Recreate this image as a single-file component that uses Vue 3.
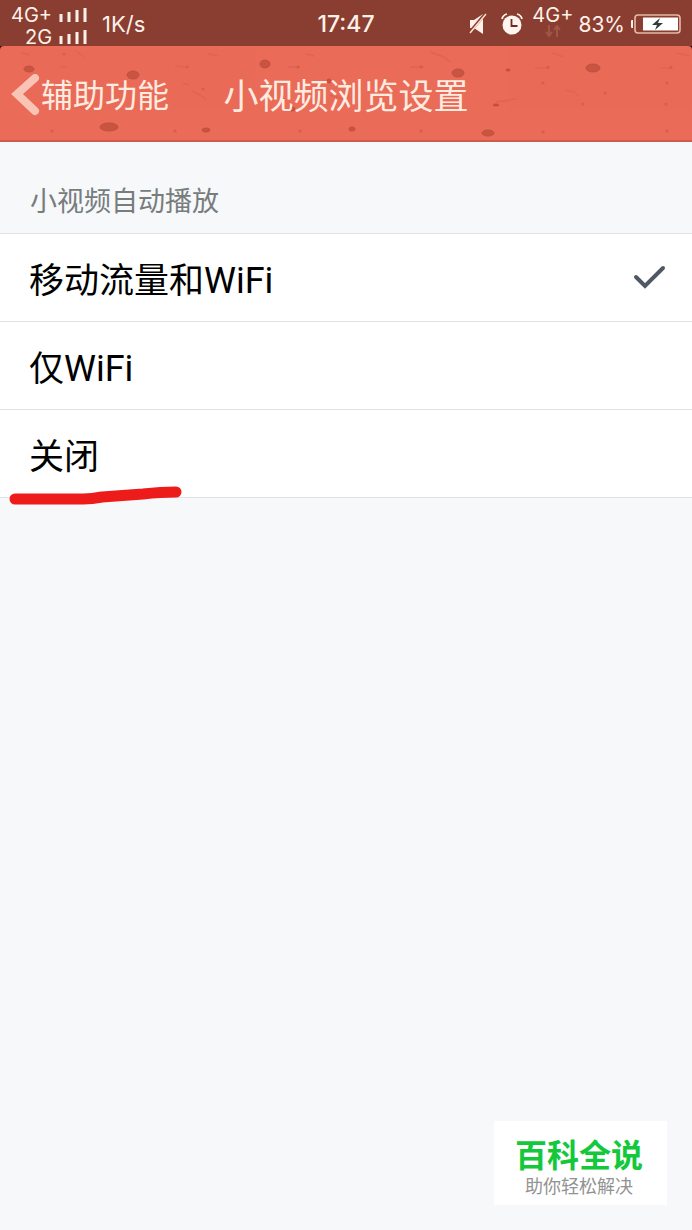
<script setup>
import { ref } from 'vue'

const selected = ref('all')
const options = [
  { value: 'all', han: '移动流量和', latin: 'WiFi' },
  { value: 'wifi', han: '仅', latin: 'WiFi' },
  { value: 'off', han: '关闭', latin: '', marked: true }
]

const pits = [
  [29, 24, 5, 3], [133, 30, 6, 4], [109, 82, 9, 4], [206, 85, 4, 2],
  [265, 19, 5, 4], [329, 36, 2, 2], [292, 64, 3, 2], [352, 84, 3, 2],
  [458, 28, 6, 4], [508, 25, 2, 1], [593, 23, 7, 4], [496, 60, 3, 1],
  [488, 88, 6, 3]
]
const specks = [
  [64, 9], [52, 51], [52, 86], [187, 22], [175, 86], [203, 44], [298, 22],
  [300, 86], [421, 22], [421, 86], [548, 22], [543, 38], [543, 87], [583, 59],
  [671, 22], [667, 38], [666, 59], [667, 86], [605, 48]
]
const scratches = [
  'M22 8l8 2', 'M60 22l7 0', 'M76 6l8 6', 'M175 21l10 1', 'M183 38l6 2',
  'M192 46l10 5 4 4', 'M208 9l10 2', 'M306 9l8 2', 'M288 22l12 0',
  'M410 22l14 0', 'M430 7l14 5 6 5', 'M552 8l12 4', 'M535 23l14 0',
  'M566 45l8 2 5 4', 'M676 8l14 3', 'M660 23l12 0', 'M496 57l20 -3',
  'M76 60l10 4', 'M330 50l14 4'
]
</script>

<template>
  <main class="screen">
    <div class="top">
      <div class="status">
        <div class="side">
          <div class="sims">
            <div class="sim">
              <span>4G+</span>
              <svg width="28" height="14" viewBox="0 0 28 14" aria-hidden="true"><path d="M2 6v8M10 4v10M18 2v12M26 0v14" /></svg>
            </div>
            <div class="sim">
              <span>2G</span>
              <svg width="28" height="14" viewBox="0 0 28 14" aria-hidden="true"><path d="M2 6v8M10 4v10M18 2v12M26 0v14" /></svg>
            </div>
          </div>
          <span class="speed">1K/s</span>
        </div>
        <time class="clock">17:47</time>
        <div class="side right">
          <svg class="mute" width="18" height="22" viewBox="0 0 18 22" aria-hidden="true">
            <path d="M1 7h4l9-6v20l-9-6H1z" fill="#fff1e9" />
            <path d="M0 20L16 1" stroke="#893e31" stroke-width="3" />
            <path d="M1 20L17 1" stroke="#ffe0d0" stroke-width="1.5" />
          </svg>
          <svg class="alarm" width="22" height="22" viewBox="0 0 22 22" aria-hidden="true">
            <circle cx="11" cy="12" r="9.500" fill="#fff4ee" />
            <path d="M1 6q1-4 5-5M21 6q-1-4-5-5" fill="none" stroke="#fff4ee" stroke-width="1.8" />
            <path d="M10.500 6v7h6" fill="none" stroke="#6b2c22" stroke-width="1.8" />
          </svg>
          <div class="data">
            <span>4G+</span>
            <svg width="16" height="12" viewBox="0 0 16 12" aria-hidden="true"><path d="M4 0v10M1 7l3 4 3-4M12 12V2M9 5l3-4 3 4" /></svg>
          </div>
          <span class="percent">83%</span>
          <svg class="battery" width="51" height="20" viewBox="0 0 51 20" aria-hidden="true">
            <path d="M3 6H2q-1 0-1 1v6q0 1 1 1h1z" fill="#fff1e9" />
            <rect x="5" y="1" width="45" height="18" rx="3" fill="none" stroke="#e8b9a9" stroke-width="1.6" />
            <rect x="13" y="3.500" width="35" height="13" fill="#fff" />
            <path d="M30 4l-8 7h5l-2 5 8-7h-5z" fill="#333b3b" />
          </svg>
        </div>
      </div>

      <header class="bar">
        <svg class="texture" viewBox="0 0 692 96" preserveAspectRatio="xMidYMid slice" aria-hidden="true">
          <g fill="none" stroke="#d45a48" stroke-width="1.5" opacity="0.4">
            <path v-for="d in scratches" :key="d" :d="d" />
          </g>
          <g fill="#cb5341" opacity="0.5">
            <circle v-for="(s, i) in specks" :key="i" :cx="s[0]" :cy="s[1]" r="1.600" />
          </g>
          <g fill="#c95441" stroke="#b94d3a" stroke-width="0.8">
            <ellipse v-for="(p, i) in pits" :key="i" :cx="p[0]" :cy="p[1]" :rx="p[2]" :ry="p[3]" />
          </g>
        </svg>
        <button class="back" type="button">
          <svg width="30" height="44" viewBox="0 0 30 44" aria-hidden="true">
            <path d="M24 4L6 20l18 17" fill="none" stroke="#f9c3b5" stroke-width="8" stroke-linecap="round" stroke-linejoin="miter" />
          </svg>
          <span>辅助功能</span>
        </button>
        <h1>小视频浏览设置</h1>
      </header>
    </div>

    <fieldset class="group">
      <legend>小视频自动播放</legend>
      <label v-for="o in options" :key="o.value" class="row">
        <span class="name">{{ o.han }}<span class="latin">{{ o.latin }}</span></span>
        <input v-model="selected" type="radio" name="autoplay" :value="o.value" />
        <svg v-if="selected === o.value" class="check" width="34" height="26" viewBox="0 0 34 26" aria-hidden="true">
          <path d="M4 12l9 9L31 3" />
        </svg>
        <svg v-if="o.marked" class="mark" width="176" height="24" viewBox="0 0 176 24" aria-hidden="true">
          <path d="M7 14H75Q84 14 94 12L135 9Q153 7 168 7" />
        </svg>
      </label>
    </fieldset>

    <aside class="stamp">
      <strong>百科全说</strong>
      <span>助你轻松解决</span>
    </aside>
  </main>
</template>

<style>
body {
  background: #f6f8fa;
}
</style>

<style scoped>
.screen {
  display: flex;
  flex-direction: column;
  min-height: 100vh;
  background: #f6f8fa;
  font-family: Roboto, "Noto Sans CJK SC", sans-serif;
  color: #000;
}
.top {
  background: #2b0804;
}
.status {
  display: grid;
  grid-template-columns: 1fr auto 1fr;
  align-items: center;
  height: 46px;
  padding: 0 11px;
  background: #893e31;
  color: #fff1e9;
  font-family: Inter, sans-serif;
}
.side {
  display: flex;
  align-items: center;
  gap: 15px;
}
.sims {
  padding-top: 4px;
}
.sim {
  display: flex;
  justify-content: flex-end;
  align-items: center;
  gap: 7px;
  font-size: 20px;
  line-height: 22px;
}
.sim path {
  stroke: #fff1e9;
  stroke-width: 3;
}
.speed {
  font-size: 22px;
}
.clock {
  font-size: 23px;
  font-weight: 500;
  line-height: 28px;
}
.right {
  justify-content: flex-end;
  gap: 5px;
}
.alarm {
  margin: 0 4px 0 9px;
}
.data {
  display: flex;
  flex-direction: column;
  align-items: center;
  padding-bottom: 6px;
  font-size: 20px;
  line-height: 20px;
}
.data path {
  fill: none;
  stroke: #a05647;
  stroke-width: 2;
}
.percent {
  font-size: 21px;
}
.bar {
  position: relative;
  display: grid;
  grid-template-columns: 1fr auto 1fr;
  align-items: center;
  box-sizing: border-box;
  height: 96px;
  padding: 6px 11px 0;
  overflow: hidden;
  border-bottom: 2px solid #cd5c4c;
  border-radius: 4px 4px 0 0;
  background: #e96b58;
  color: #ffebe0;
}
.texture {
  position: absolute;
  inset: 0;
  width: 100%;
  height: 100%;
}
.back {
  position: relative;
  display: flex;
  align-items: center;
  justify-self: start;
  padding: 0;
  border: 0;
  background: none;
  color: inherit;
  font: inherit;
  font-size: 32px;
  line-height: 44px;
  white-space: nowrap;
}
h1 {
  position: relative;
  margin: 0;
  padding-top: 4px;
  font-size: 35px;
  font-weight: 400;
  line-height: 48px;
}
.group {
  min-width: 0;
  margin: 0;
  padding: 0;
  border: 0;
  border-bottom: 1px solid #dfe3e5;
}
legend {
  box-sizing: border-box;
  height: 91px;
  padding: 40px 30px 0;
  color: #777c7d;
  font-size: 27px;
  line-height: 40px;
}
.row {
  position: relative;
  display: flex;
  align-items: center;
  justify-content: space-between;
  box-sizing: border-box;
  height: 88px;
  padding: 0 26px 0 29px;
  border-top: 1px solid #dfe3e5;
  background: #fff;
}
.name {
  padding-top: 8px;
  font-size: 35px;
  line-height: 48px;
}
.latin {
  font-size: 36px;
}
input {
  position: absolute;
  opacity: 0;
}
.check path {
  fill: none;
  stroke: #505865;
  stroke-width: 4;
  stroke-linecap: round;
}
.mark {
  position: absolute;
  left: 8px;
  bottom: -12px;
  z-index: 1;
}
.mark path {
  fill: none;
  stroke: #ee1b1b;
  stroke-width: 11;
  stroke-linecap: round;
  stroke-linejoin: round;
}
.stamp {
  display: flex;
  flex-direction: column;
  align-items: center;
  align-self: flex-end;
  box-sizing: border-box;
  margin: auto 25px 25px 0;
  padding: 15px 24px 8px 21px;
  background: #fff;
}
strong {
  color: #13c93b;
  font-size: 32px;
  font-weight: 700;
  line-height: 41px;
}
.stamp span {
  color: #929292;
  font-size: 18px;
  line-height: 20px;
}
</style>
